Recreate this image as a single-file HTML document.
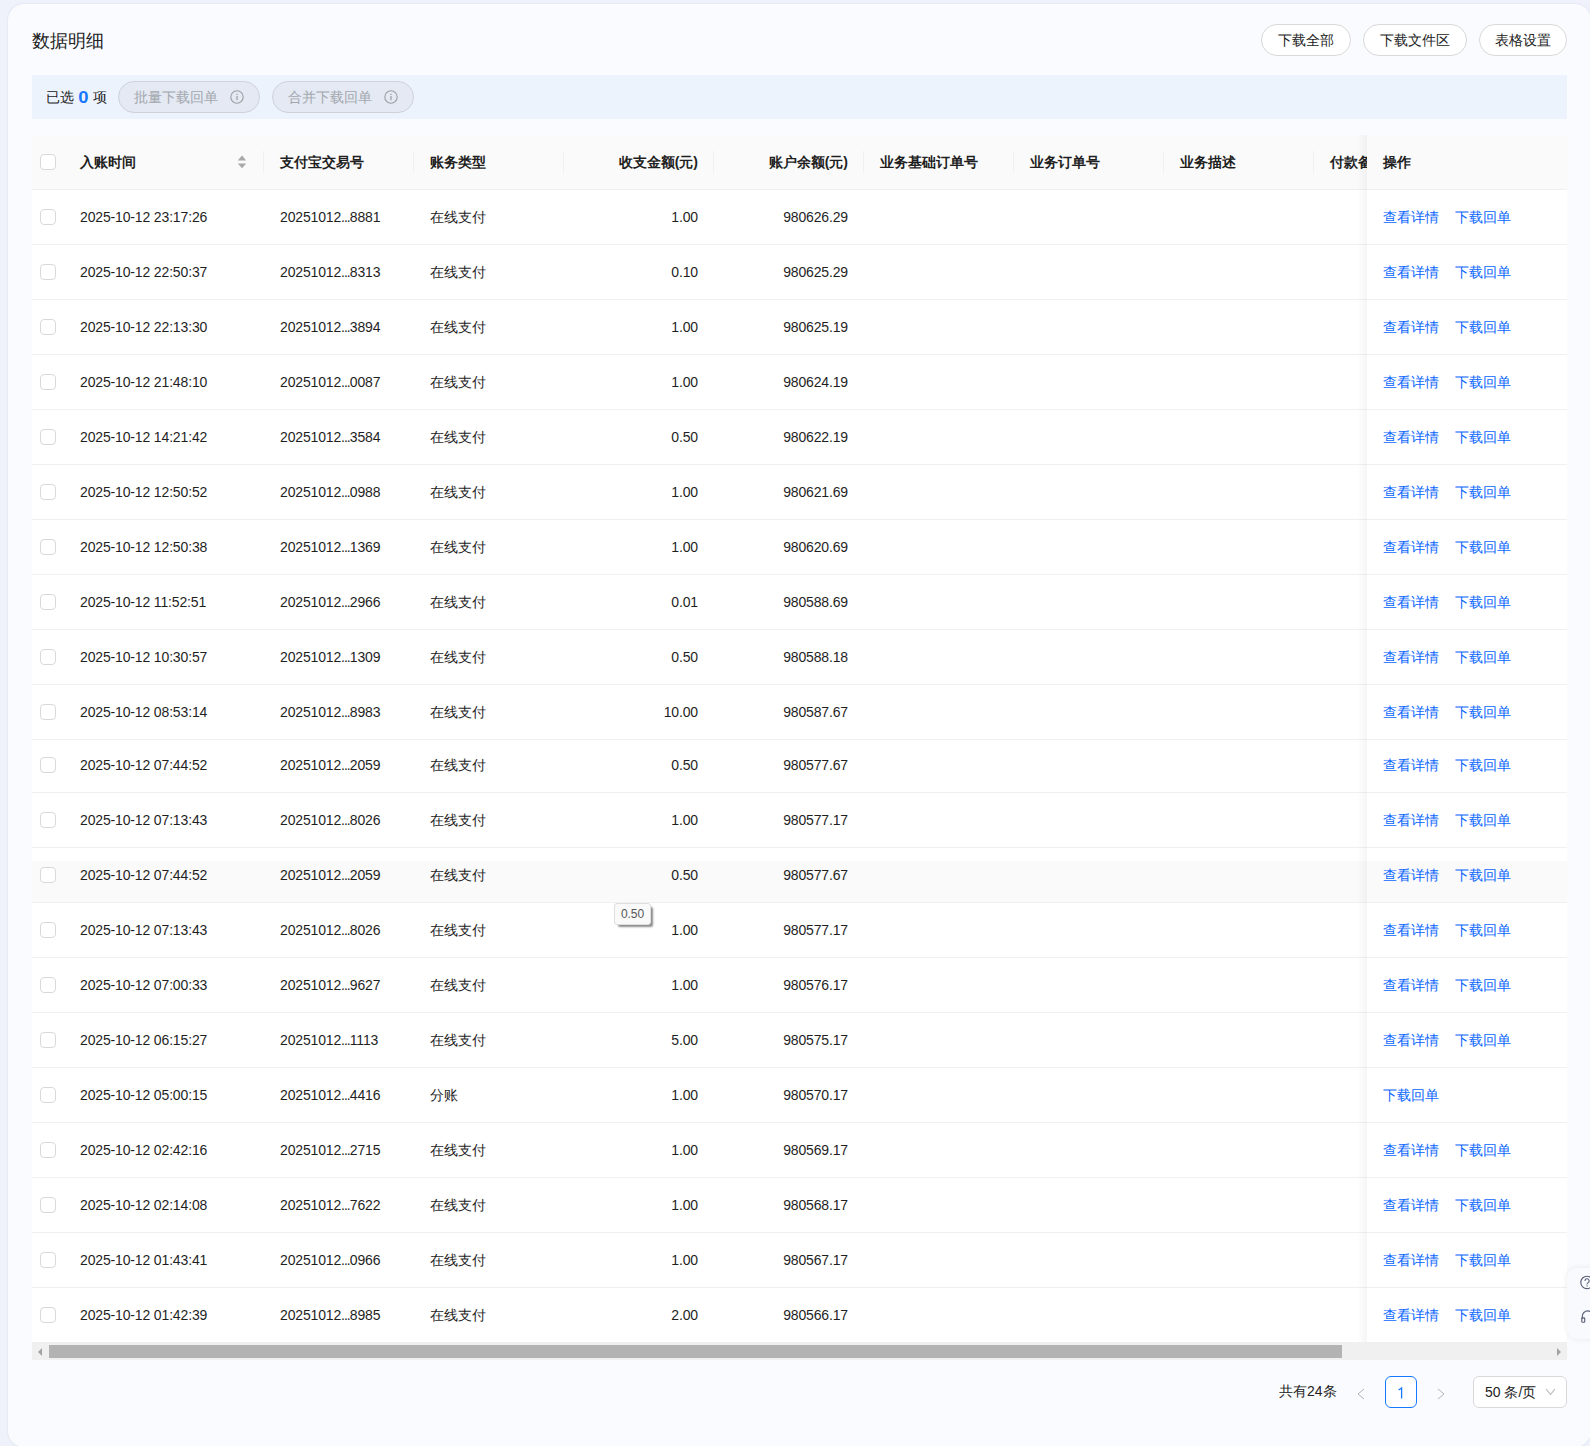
<!DOCTYPE html><html><head><meta charset="utf-8"><title>数据明细</title><style>*{box-sizing:border-box;margin:0;padding:0}
html,body{width:1590px;height:1446px;overflow:hidden}
body{background:#eff2fb;font-family:"Liberation Sans",sans-serif;color:#1f1f1f;position:relative}
.card{position:absolute;left:8px;top:4px;width:1583px;height:1443px;background:#f9fbfe;border-radius:16px;box-shadow:0 0 2px rgba(150,160,190,.3)}
.title{position:absolute;left:32px;top:28.5px;font-size:18px;line-height:24px;color:#222}
.tbtn{position:absolute;top:24px;height:32px;border:1px solid #d9d9d9;border-radius:16px;background:#fff;font-size:14px;line-height:30px;text-align:center;color:#222}
.selbar{position:absolute;left:32px;top:75px;width:1535px;height:44px;background:#edf3fd}
.selt{position:absolute;left:14px;top:12px;font-size:14px;line-height:20px;color:#222}
.selt b{color:#1677ff;font-weight:bold;font-size:16px;display:inline-block;transform:scaleX(1.15);vertical-align:-1px;margin:0 1px}
.sbtn{position:absolute;top:81px;height:32px;width:142px;border:1px solid #cfd2d8;border-radius:16px;background:#e4e9f3;color:#a3a7ae;font-size:14px;line-height:30px}
.sbtn span{position:absolute;left:15px;top:0}
.sbtn .info{position:absolute;left:111px;top:8px}
.tbl{position:absolute;left:32px;top:135px;width:1535px;height:1207px;background:#fff;overflow:hidden;border-radius:8px 0 0 0}
.thead{position:absolute;left:0;top:0;width:1535px;height:55px;background:#fafafa;border-bottom:1px solid #f0f0f0}
.th{position:absolute;top:17px;font-size:14px;line-height:20px;font-weight:bold;color:#1f1f1f;white-space:nowrap}
.div{position:absolute;top:16px;width:1px;height:22px;background:#f0f0f0}
.sort{position:absolute;left:205px;top:20px}
.cb{position:absolute;left:8px;width:16px;height:16px;border:1px solid #d9d9d9;border-radius:4px;background:#fff}
.row{position:absolute;left:0;width:1535px;border-bottom:1px solid #f0f0f0;box-sizing:content-box}
.row .cb{top:calc(50% - 8px)}
.td{position:absolute;top:calc(50% - 10px);font-size:14px;line-height:20px;white-space:nowrap;color:#1f1f1f;letter-spacing:-0.15px}
.dots{letter-spacing:-1px}
.hover{background:linear-gradient(to bottom,#fff 0,#fff 13px,#fafafa 13px)}
.fixed{position:absolute;left:1335px;top:0;width:200px;height:1207px;background:#fff}
.fhead{position:absolute;left:0;top:0;width:200px;height:55px;background:#fafafa;border-bottom:1px solid #f0f0f0}
.frow{position:absolute;left:0;width:200px;border-bottom:1px solid #f0f0f0;box-sizing:content-box}
.lk{position:absolute;top:calc(50% - 10px);font-size:14px;line-height:20px;color:#0a66ff;white-space:nowrap}
.fshadow{position:absolute;left:1325px;top:0;width:10px;height:1207px;background:linear-gradient(to right,rgba(0,0,0,0),rgba(0,0,0,.04))}
.sb{position:absolute;left:32px;top:1342px;width:1535px;height:18px;background:#f0f0f0}
.thumb{position:absolute;left:17px;top:3px;width:1293px;height:13px;background:#b3b3b3}
.sbl{position:absolute;left:6px;top:6px;width:0;height:0;border-top:4px solid transparent;border-bottom:4px solid transparent;border-right:4px solid #a3a3a3}
.sbr{position:absolute;right:6px;top:6px;width:0;height:0;border-top:4px solid transparent;border-bottom:4px solid transparent;border-left:4px solid #a3a3a3}
.tip{position:absolute;left:614px;top:903px;width:37px;height:22px;background:#f9f9f9;border:1px solid #dedede;border-radius:3px;font-size:12px;line-height:21px;text-align:center;color:#575757;box-shadow:3px 3px 2px -1px rgba(0,0,0,.45);letter-spacing:-0.1px}
.total{position:absolute;left:1279px;top:1381px;font-size:14px;line-height:20px;color:#222}
.pg{position:absolute;top:1388px}
.page1{position:absolute;left:1385px;top:1376px;width:32px;height:32px;border:1px solid #1677ff;border-radius:6px;color:#1677ff;font-size:14px;line-height:30px;text-align:center;background:#fff}
.psel{position:absolute;left:1473px;top:1376px;width:94px;height:32px;border:1px solid #d9d9d9;border-radius:6px;background:#fff;font-size:14px;line-height:30px;padding-left:11px;color:#222}
.chev{position:absolute;left:71px;top:11px}
.float{position:absolute;left:1567px;top:1268px;width:60px;height:71px;background:#f8fafd;border-radius:10px;box-shadow:0 0 6px rgba(0,0,0,.08)}
.q{position:absolute;left:12px;top:7px}
.hp{position:absolute;left:13px;top:41px}

.r11 .cb,.r11 .td,.r11 .lk{margin-top:-1px}
</style></head><body>
<div class="card"></div>
<div class="title">数据明细</div>
<div class="tbtn" style="left:1261px;width:90px">下载全部</div>
<div class="tbtn" style="left:1363px;width:104px">下载文件区</div>
<div class="tbtn" style="left:1479px;width:88px">表格设置</div>
<div class="selbar"><span class="selt">已选 <b>0</b> 项</span></div>
<div class="sbtn" style="left:118px"><span>批量下载回单</span><svg class="info" width="14" height="14" viewBox="0 0 14 14"><circle cx="7" cy="7" r="6.2" fill="none" stroke="#9c9ea3" stroke-width="1.1"/><rect x="6.4" y="6" width="1.2" height="4.2" fill="#9c9ea3"/><rect x="6.4" y="3.8" width="1.2" height="1.2" fill="#9c9ea3"/></svg></div>
<div class="sbtn" style="left:272px"><span>合并下载回单</span><svg class="info" width="14" height="14" viewBox="0 0 14 14"><circle cx="7" cy="7" r="6.2" fill="none" stroke="#9c9ea3" stroke-width="1.1"/><rect x="6.4" y="6" width="1.2" height="4.2" fill="#9c9ea3"/><rect x="6.4" y="3.8" width="1.2" height="1.2" fill="#9c9ea3"/></svg></div>
<div class="tbl">
<div class="thead"></div>
<div class="cb" style="left:8px;top:19px"></div>
<div class="th" style="left:48px">入账时间</div>
<div class="th" style="left:248px">支付宝交易号</div>
<div class="th" style="left:398px">账务类型</div>
<div class="th" style="right:869px">收支金额(元)</div>
<div class="th" style="right:719px">账户余额(元)</div>
<div class="th" style="left:848px">业务基础订单号</div>
<div class="th" style="left:998px">业务订单号</div>
<div class="th" style="left:1148px">业务描述</div>
<div class="th" style="left:1298px">付款备注</div>
<div class="div" style="left:231px"></div>
<div class="div" style="left:381px"></div>
<div class="div" style="left:531px"></div>
<div class="div" style="left:681px"></div>
<div class="div" style="left:831px"></div>
<div class="div" style="left:981px"></div>
<div class="div" style="left:1131px"></div>
<div class="div" style="left:1281px"></div>
<svg class="sort" width="10" height="14" viewBox="0 0 10 14"><path d="M5 0.6 L9.2 5.6 L0.8 5.6 Z" fill="#a8a8a8"/><path d="M5 13.2 L9.2 8.4 L0.8 8.4 Z" fill="#a8a8a8"/></svg>
<div class="row" style="top:55px;height:54px">
<div class="cb"></div>
<div class="td" style="left:48px">2025-10-12 23:17:26</div>
<div class="td" style="left:248px">20251012<span class="dots">...</span>8881</div>
<div class="td" style="left:398px">在线支付</div>
<div class="td r" style="right:869px">1.00</div>
<div class="td r" style="right:719px">980626.29</div>
</div>
<div class="row" style="top:110px;height:54px">
<div class="cb"></div>
<div class="td" style="left:48px">2025-10-12 22:50:37</div>
<div class="td" style="left:248px">20251012<span class="dots">...</span>8313</div>
<div class="td" style="left:398px">在线支付</div>
<div class="td r" style="right:869px">0.10</div>
<div class="td r" style="right:719px">980625.29</div>
</div>
<div class="row" style="top:165px;height:54px">
<div class="cb"></div>
<div class="td" style="left:48px">2025-10-12 22:13:30</div>
<div class="td" style="left:248px">20251012<span class="dots">...</span>3894</div>
<div class="td" style="left:398px">在线支付</div>
<div class="td r" style="right:869px">1.00</div>
<div class="td r" style="right:719px">980625.19</div>
</div>
<div class="row" style="top:220px;height:54px">
<div class="cb"></div>
<div class="td" style="left:48px">2025-10-12 21:48:10</div>
<div class="td" style="left:248px">20251012<span class="dots">...</span>0087</div>
<div class="td" style="left:398px">在线支付</div>
<div class="td r" style="right:869px">1.00</div>
<div class="td r" style="right:719px">980624.19</div>
</div>
<div class="row" style="top:275px;height:54px">
<div class="cb"></div>
<div class="td" style="left:48px">2025-10-12 14:21:42</div>
<div class="td" style="left:248px">20251012<span class="dots">...</span>3584</div>
<div class="td" style="left:398px">在线支付</div>
<div class="td r" style="right:869px">0.50</div>
<div class="td r" style="right:719px">980622.19</div>
</div>
<div class="row" style="top:330px;height:54px">
<div class="cb"></div>
<div class="td" style="left:48px">2025-10-12 12:50:52</div>
<div class="td" style="left:248px">20251012<span class="dots">...</span>0988</div>
<div class="td" style="left:398px">在线支付</div>
<div class="td r" style="right:869px">1.00</div>
<div class="td r" style="right:719px">980621.69</div>
</div>
<div class="row" style="top:385px;height:54px">
<div class="cb"></div>
<div class="td" style="left:48px">2025-10-12 12:50:38</div>
<div class="td" style="left:248px">20251012<span class="dots">...</span>1369</div>
<div class="td" style="left:398px">在线支付</div>
<div class="td r" style="right:869px">1.00</div>
<div class="td r" style="right:719px">980620.69</div>
</div>
<div class="row" style="top:440px;height:54px">
<div class="cb"></div>
<div class="td" style="left:48px">2025-10-12 11:52:51</div>
<div class="td" style="left:248px">20251012<span class="dots">...</span>2966</div>
<div class="td" style="left:398px">在线支付</div>
<div class="td r" style="right:869px">0.01</div>
<div class="td r" style="right:719px">980588.69</div>
</div>
<div class="row" style="top:495px;height:54px">
<div class="cb"></div>
<div class="td" style="left:48px">2025-10-12 10:30:57</div>
<div class="td" style="left:248px">20251012<span class="dots">...</span>1309</div>
<div class="td" style="left:398px">在线支付</div>
<div class="td r" style="right:869px">0.50</div>
<div class="td r" style="right:719px">980588.18</div>
</div>
<div class="row" style="top:550px;height:54px">
<div class="cb"></div>
<div class="td" style="left:48px">2025-10-12 08:53:14</div>
<div class="td" style="left:248px">20251012<span class="dots">...</span>8983</div>
<div class="td" style="left:398px">在线支付</div>
<div class="td r" style="right:869px">10.00</div>
<div class="td r" style="right:719px">980587.67</div>
</div>
<div class="row r11" style="top:605px;height:52px">
<div class="cb"></div>
<div class="td" style="left:48px">2025-10-12 07:44:52</div>
<div class="td" style="left:248px">20251012<span class="dots">...</span>2059</div>
<div class="td" style="left:398px">在线支付</div>
<div class="td r" style="right:869px">0.50</div>
<div class="td r" style="right:719px">980577.67</div>
</div>
<div class="row" style="top:658px;height:54px">
<div class="cb"></div>
<div class="td" style="left:48px">2025-10-12 07:13:43</div>
<div class="td" style="left:248px">20251012<span class="dots">...</span>8026</div>
<div class="td" style="left:398px">在线支付</div>
<div class="td r" style="right:869px">1.00</div>
<div class="td r" style="right:719px">980577.17</div>
</div>
<div class="row hover" style="top:713px;height:54px">
<div class="cb"></div>
<div class="td" style="left:48px">2025-10-12 07:44:52</div>
<div class="td" style="left:248px">20251012<span class="dots">...</span>2059</div>
<div class="td" style="left:398px">在线支付</div>
<div class="td r" style="right:869px">0.50</div>
<div class="td r" style="right:719px">980577.67</div>
</div>
<div class="row" style="top:768px;height:54px">
<div class="cb"></div>
<div class="td" style="left:48px">2025-10-12 07:13:43</div>
<div class="td" style="left:248px">20251012<span class="dots">...</span>8026</div>
<div class="td" style="left:398px">在线支付</div>
<div class="td r" style="right:869px">1.00</div>
<div class="td r" style="right:719px">980577.17</div>
</div>
<div class="row" style="top:823px;height:54px">
<div class="cb"></div>
<div class="td" style="left:48px">2025-10-12 07:00:33</div>
<div class="td" style="left:248px">20251012<span class="dots">...</span>9627</div>
<div class="td" style="left:398px">在线支付</div>
<div class="td r" style="right:869px">1.00</div>
<div class="td r" style="right:719px">980576.17</div>
</div>
<div class="row" style="top:878px;height:54px">
<div class="cb"></div>
<div class="td" style="left:48px">2025-10-12 06:15:27</div>
<div class="td" style="left:248px">20251012<span class="dots">...</span>1113</div>
<div class="td" style="left:398px">在线支付</div>
<div class="td r" style="right:869px">5.00</div>
<div class="td r" style="right:719px">980575.17</div>
</div>
<div class="row" style="top:933px;height:54px">
<div class="cb"></div>
<div class="td" style="left:48px">2025-10-12 05:00:15</div>
<div class="td" style="left:248px">20251012<span class="dots">...</span>4416</div>
<div class="td" style="left:398px">分账</div>
<div class="td r" style="right:869px">1.00</div>
<div class="td r" style="right:719px">980570.17</div>
</div>
<div class="row" style="top:988px;height:54px">
<div class="cb"></div>
<div class="td" style="left:48px">2025-10-12 02:42:16</div>
<div class="td" style="left:248px">20251012<span class="dots">...</span>2715</div>
<div class="td" style="left:398px">在线支付</div>
<div class="td r" style="right:869px">1.00</div>
<div class="td r" style="right:719px">980569.17</div>
</div>
<div class="row" style="top:1043px;height:54px">
<div class="cb"></div>
<div class="td" style="left:48px">2025-10-12 02:14:08</div>
<div class="td" style="left:248px">20251012<span class="dots">...</span>7622</div>
<div class="td" style="left:398px">在线支付</div>
<div class="td r" style="right:869px">1.00</div>
<div class="td r" style="right:719px">980568.17</div>
</div>
<div class="row" style="top:1098px;height:54px">
<div class="cb"></div>
<div class="td" style="left:48px">2025-10-12 01:43:41</div>
<div class="td" style="left:248px">20251012<span class="dots">...</span>0966</div>
<div class="td" style="left:398px">在线支付</div>
<div class="td r" style="right:869px">1.00</div>
<div class="td r" style="right:719px">980567.17</div>
</div>
<div class="row" style="top:1153px;height:54px">
<div class="cb"></div>
<div class="td" style="left:48px">2025-10-12 01:42:39</div>
<div class="td" style="left:248px">20251012<span class="dots">...</span>8985</div>
<div class="td" style="left:398px">在线支付</div>
<div class="td r" style="right:869px">2.00</div>
<div class="td r" style="right:719px">980566.17</div>
</div>
<div class="fixed">
<div class="fhead"></div><div class="th" style="left:16px">操作</div>
<div class="frow" style="top:55px;height:54px">
<span class="lk" style="left:16px">查看详情</span><span class="lk" style="left:88px">下载回单</span>
</div>
<div class="frow" style="top:110px;height:54px">
<span class="lk" style="left:16px">查看详情</span><span class="lk" style="left:88px">下载回单</span>
</div>
<div class="frow" style="top:165px;height:54px">
<span class="lk" style="left:16px">查看详情</span><span class="lk" style="left:88px">下载回单</span>
</div>
<div class="frow" style="top:220px;height:54px">
<span class="lk" style="left:16px">查看详情</span><span class="lk" style="left:88px">下载回单</span>
</div>
<div class="frow" style="top:275px;height:54px">
<span class="lk" style="left:16px">查看详情</span><span class="lk" style="left:88px">下载回单</span>
</div>
<div class="frow" style="top:330px;height:54px">
<span class="lk" style="left:16px">查看详情</span><span class="lk" style="left:88px">下载回单</span>
</div>
<div class="frow" style="top:385px;height:54px">
<span class="lk" style="left:16px">查看详情</span><span class="lk" style="left:88px">下载回单</span>
</div>
<div class="frow" style="top:440px;height:54px">
<span class="lk" style="left:16px">查看详情</span><span class="lk" style="left:88px">下载回单</span>
</div>
<div class="frow" style="top:495px;height:54px">
<span class="lk" style="left:16px">查看详情</span><span class="lk" style="left:88px">下载回单</span>
</div>
<div class="frow" style="top:550px;height:54px">
<span class="lk" style="left:16px">查看详情</span><span class="lk" style="left:88px">下载回单</span>
</div>
<div class="frow r11" style="top:605px;height:52px">
<span class="lk" style="left:16px">查看详情</span><span class="lk" style="left:88px">下载回单</span>
</div>
<div class="frow" style="top:658px;height:54px">
<span class="lk" style="left:16px">查看详情</span><span class="lk" style="left:88px">下载回单</span>
</div>
<div class="frow hover" style="top:713px;height:54px">
<span class="lk" style="left:16px">查看详情</span><span class="lk" style="left:88px">下载回单</span>
</div>
<div class="frow" style="top:768px;height:54px">
<span class="lk" style="left:16px">查看详情</span><span class="lk" style="left:88px">下载回单</span>
</div>
<div class="frow" style="top:823px;height:54px">
<span class="lk" style="left:16px">查看详情</span><span class="lk" style="left:88px">下载回单</span>
</div>
<div class="frow" style="top:878px;height:54px">
<span class="lk" style="left:16px">查看详情</span><span class="lk" style="left:88px">下载回单</span>
</div>
<div class="frow" style="top:933px;height:54px">
<span class="lk" style="left:16px">下载回单</span>
</div>
<div class="frow" style="top:988px;height:54px">
<span class="lk" style="left:16px">查看详情</span><span class="lk" style="left:88px">下载回单</span>
</div>
<div class="frow" style="top:1043px;height:54px">
<span class="lk" style="left:16px">查看详情</span><span class="lk" style="left:88px">下载回单</span>
</div>
<div class="frow" style="top:1098px;height:54px">
<span class="lk" style="left:16px">查看详情</span><span class="lk" style="left:88px">下载回单</span>
</div>
<div class="frow" style="top:1153px;height:54px">
<span class="lk" style="left:16px">查看详情</span><span class="lk" style="left:88px">下载回单</span>
</div>
</div>
<div class="fshadow"></div>
</div>
<div class="sb"><div class="sbl"></div><div class="thumb"></div><div class="sbr"></div></div>
<div class="tip">0.50</div>
<div class="total">共有24条</div>
<svg class="pg" style="left:1356px" width="10" height="12" viewBox="0 0 10 12"><path d="M8 1 L2 6 L8 11" fill="none" stroke="#b3b3b3" stroke-width="1"/></svg>
<div class="page1"><svg width="8" height="12" viewBox="0 0 8 12" style="position:absolute;left:11px;top:10px"><path d="M1.6 3 L4.6 1 V11.5" fill="none" stroke="#1677ff" stroke-width="1.3"/></svg></div>
<svg class="pg" style="left:1436px" width="10" height="12" viewBox="0 0 10 12"><path d="M2 1 L8 6 L2 11" fill="none" stroke="#b3b3b3" stroke-width="1"/></svg>
<div class="psel">50 条/页<svg class="chev" width="11" height="8" viewBox="0 0 11 8"><path d="M1 1 L5.5 6.5 L10 1" fill="none" stroke="#b5b5b5" stroke-width="1.1"/></svg></div>
<div class="float"><svg class="q" width="16" height="16" viewBox="0 0 16 16"><circle cx="8" cy="7.4" r="6.2" fill="none" stroke="#5b6078" stroke-width="1.15"/><path d="M6 5.9 A2.05 2.05 0 1 1 9.1 7.6 C8.4 8 8.05 8.4 8.05 9.3 V9.6" fill="none" stroke="#5b6078" stroke-width="1.1"/><circle cx="8.05" cy="10.9" r="0.6" fill="#5b6078"/></svg><svg class="hp" width="16" height="16" viewBox="0 0 16 16"><path d="M2.3 10 V7.3 A5.4 5.4 0 0 1 13.1 7.3 V10" fill="none" stroke="#5b6078" stroke-width="1.15"/><rect x="1.8" y="8.8" width="2.9" height="4.4" rx="0.6" fill="none" stroke="#5b6078" stroke-width="1.15"/><rect x="10.6" y="8.8" width="2.9" height="4.4" rx="0.6" fill="none" stroke="#5b6078" stroke-width="1.15"/></svg></div>
</body></html>
